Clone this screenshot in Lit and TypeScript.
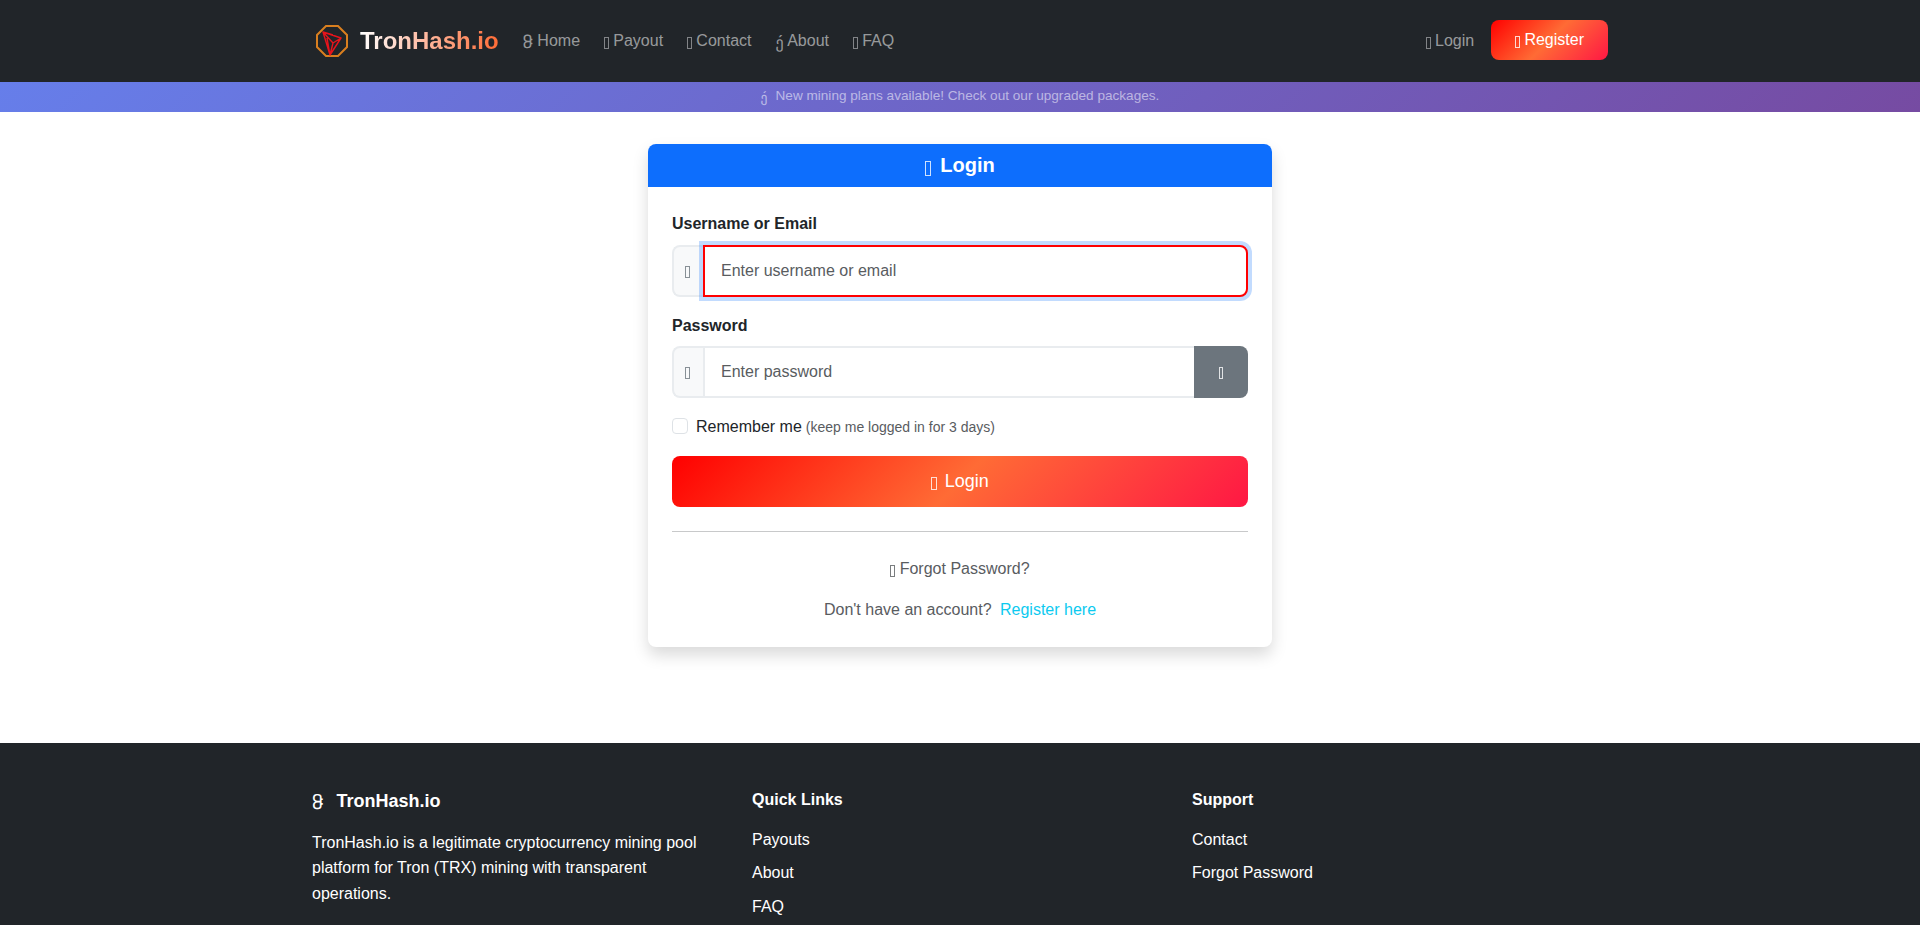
import { LitElement, html, css } from "lit";
import { customElement } from "lit/decorators.js";

const G = (c: string) => html`<i class="g">${c}</i>`;
const B = () => html`<i class="b"></i>`;

@customElement("app-root")
export class AppRoot extends LitElement {
  static styles = css`
    :host { display: block; font-family: "Liberation Sans", Arial, sans-serif; font-size: 16px; line-height: 1.6; color: #212529; background: #fff; }
    * { box-sizing: border-box; }
    a { text-decoration: none; color: inherit; }
    .g { font-family: "DejaVu Sans", sans-serif; font-style: normal; font-weight: 400; display: inline-block; line-height: 1; vertical-align: -.125em; }
    .b { display: inline-block; width: .3em; height: .75em; border: 1px solid currentColor; opacity: .8; vertical-align: -.2em; }
    .nav { background: #212529; height: 82px; }
    .wrap { width: 1320px; margin: 0 auto; padding: 0 12px; }
    .nav .wrap { display: flex; align-items: center; height: 100%; padding: 0 12px 0 15px; }
    .brand { display: flex; align-items: center; gap: 11px; margin-right: 16px; }
    .brand svg { display: block; }
    .brand b { font-size: 24px; background: linear-gradient(90deg, #fff, #ff6b35); -webkit-background-clip: text; background-clip: text; color: transparent; }
    .links { display: flex; flex: 1; }
    .links a, .login { padding: 8px; margin-right: 8px; color: rgba(255,255,255,.55); white-space: nowrap; }
    .login { margin-right: 9px; }
    .reg { display: block; height: 40px; margin: -2px 0 0 0; padding: 7px 24px 5px; text-align: center; color: #fff; border-radius: 8px; background: linear-gradient(135deg, #ff0000, #ff6b35, #ff1744); }
    .ann { height: 30px; background: linear-gradient(135deg, #667eea, #764ba2); text-align: center; font-size: 13.6px; line-height: 28px; color: rgba(255,255,255,.55); }
    .ann .g { margin-right: 8px; }
    .main { height: 631px; padding-top: 32px; }
    .card { width: 624px; height: 503px; margin: 0 auto; border-radius: 8px; box-shadow: 0 8px 16px rgba(0,0,0,.15); background: #fff; }
    .head { background: #0d6efd; color: #fff; height: 43px; border-radius: 8px 8px 0 0; text-align: center; font-size: 20px; font-weight: 700; line-height: 42px; }
    .head .b { margin-right: 9px; }
    .body { padding: 24px; }
    label.l { display: block; font-weight: 700; margin-bottom: 8px; }
    .group { display: flex; height: 52px; margin-bottom: 16px; }
    .addon { width: 31px; flex: none; display: flex; align-items: center; justify-content: center; padding-right: 2px; border: 2px solid #e9ecef; border-right: 0; border-radius: 8px 0 0 8px; background: #f8f9fa; color: #6c757d; }
    .addon .b, .eye .b { vertical-align: 0; margin-top: 2px; }
    input.t { flex: 1; min-width: 0; font: inherit; line-height: 24px; padding: 12px 16px; border: 2px solid #e9ecef; border-radius: 0 8px 8px 0; outline: 0; color: #212529; background: #fff; }
    input.t::placeholder { color: #595c5f; opacity: 1; }
    input.focus { position: relative; border-color: #ff0000; box-shadow: 0 0 0 4px rgba(13,110,253,.25); }
    input.mid { border-radius: 0; border-right: 0; }
    .eye { width: 54px; flex: none; display: flex; align-items: center; justify-content: center; background: #6c757d; color: #fff; border-radius: 0 8px 8px 0; }
    .check { display: flex; align-items: center; height: 25.6px; margin-bottom: 16px; }
    .box { width: 16px; height: 16px; border: 1px solid #dee2e6; border-radius: 4px; margin: -2px 8px 0 0; background: #fff; }
    .check small { font-size: 14px; color: #595c5f; margin-left: 4px; }
    .go { display: block; height: 51px; line-height: 51px; text-align: center; color: #fff; font-size: 18px; border-radius: 8px; background: linear-gradient(135deg, #ff0000, #ff6b35, #ff1744); }
    .go .b { margin-right: 8px; }
    hr { border: 0; border-top: 1px solid #c8c9ca; margin: 24px 0; height: 1px; }
    .center { text-align: center; color: #595c5f; }
    .center + .center { margin-top: 16px; }
    .info { color: #0dcaf0; margin-left: 4px; }
    footer { background: #212529; color: #fff; padding-top: 47px; padding-bottom: 24px; }
    .cols { display: grid; grid-template-columns: repeat(3, 1fr); column-gap: 24px; }
    .cols > div { padding-right: 8px; }
    h5 { margin: 0 0 17px; padding-top: 1px; font-size: 18px; font-weight: 700; line-height: 1.2; }
    h5 .g { margin-right: 8px; }
    h6 { margin: 0 0 17.5px; font-size: 16px; font-weight: 700; line-height: 1.2; }
    p { margin: 0 0 16px; max-width: 400px; }
    ul { list-style: none; margin: 0; padding: 0; }
    li { margin-bottom: 8px; }
  `;

  render() {
    return html`
      <nav class="nav"><div class="wrap">
        <a class="brand" href="#">
          <svg width="34" height="34" viewBox="0 0 34 34" fill="none">
            <polygon points="11,2 23,2 32,11 32,23 23,32 11,32 2,23 2,11" stroke="#d97f1f" stroke-width="2"/>
            <path d="M8 8 L26 14 L15 31 Z M8 8 L18 19 L26 14 M18 19 L15 31 M12 14 L15 31 M8 8 L18 11" stroke="#e8141c" stroke-width="1.4" stroke-linejoin="round"/>
          </svg>
          <b>TronHash.io</b>
        </a>
        <div class="links">
          <a href="#">${G("\uf425")} Home</a>
          <a href="#">${B()} Payout</a>
          <a href="#">${B()} Contact</a>
          <a href="#">${G("\uf431")} About</a>
          <a href="#">${B()} FAQ</a>
        </div>
        <a class="login" href="#">${B()} Login</a>
        <a class="reg" href="#">${B()} Register</a>
      </div></nav>
      <div class="ann">${G("\uf431")}New mining plans available! Check out our upgraded packages.</div>
      <main class="main">
        <section class="card">
          <div class="head">${B()}Login</div>
          <div class="body">
            <label class="l">Username or Email</label>
            <div class="group"><span class="addon">${B()}</span><input class="t focus" placeholder="Enter username or email" /></div>
            <label class="l">Password</label>
            <div class="group"><span class="addon">${B()}</span><input class="t mid" type="password" placeholder="Enter password" /><span class="eye">${B()}</span></div>
            <div class="check"><span class="box"></span><span>Remember me</span><small>(keep me logged in for 3 days)</small></div>
            <a class="go" href="#">${B()}Login</a>
            <hr />
            <div class="center"><a href="#">${B()} Forgot Password?</a></div>
            <div class="center">Don't have an account? <a class="info" href="#">Register here</a></div>
          </div>
        </section>
      </main>
      <footer><div class="wrap cols">
        <div>
          <h5>${G("\uf425")} TronHash.io</h5>
          <p>TronHash.io is a legitimate cryptocurrency mining pool platform for Tron (TRX) mining with transparent operations.</p>
        </div>
        <div>
          <h6>Quick Links</h6>
          <ul><li>Payouts</li><li>About</li><li>FAQ</li></ul>
        </div>
        <div>
          <h6>Support</h6>
          <ul><li>Contact</li><li>Forgot Password</li></ul>
        </div>
      </div></footer>
    `;
  }
}
